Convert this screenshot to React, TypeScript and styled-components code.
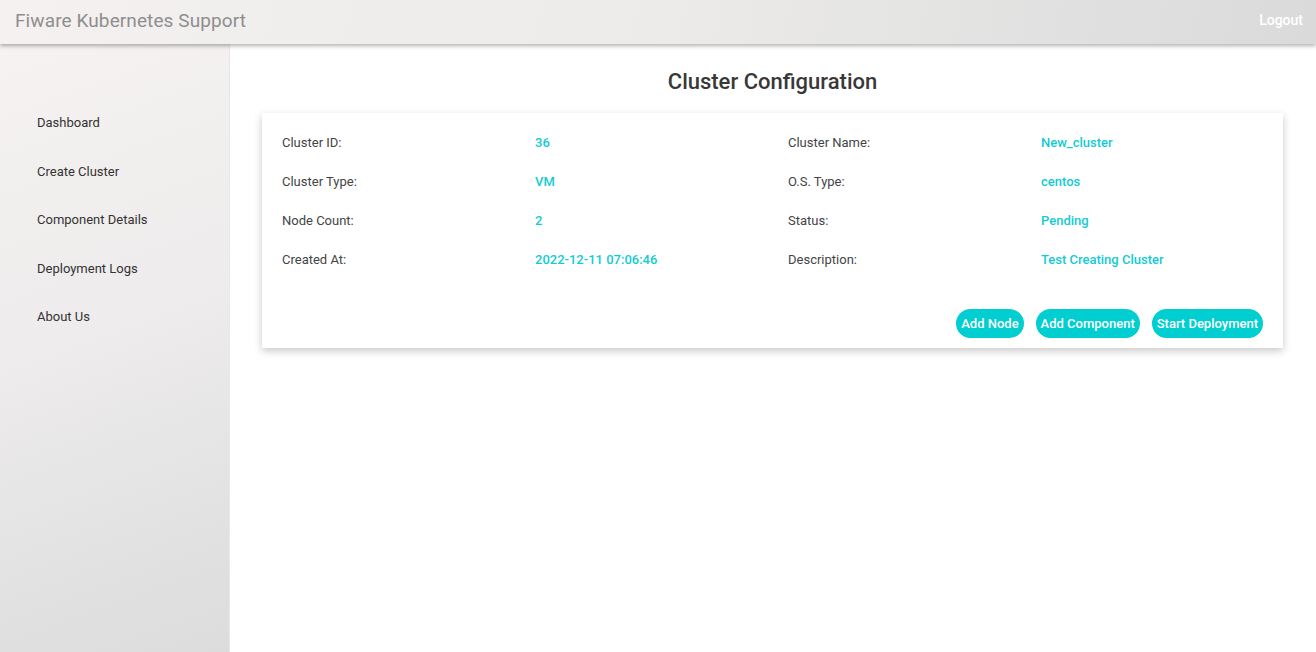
import React from 'react';
import styled, { createGlobalStyle } from 'styled-components';

const GlobalStyle = createGlobalStyle`
  html, body {
    margin: 0;
    padding: 0;
    height: 100%;
    background: #ffffff;
    font-family: Roboto, 'Liberation Sans', sans-serif;
  }
  #root {
    height: 100%;
  }
  * {
    box-sizing: border-box;
  }
`;

const Page = styled.div`
  display: flex;
  flex-direction: column;
  width: 100%;
  height: 652px;
  overflow: hidden;
`;

const Header = styled.header`
  position: relative;
  z-index: 2;
  display: flex;
  justify-content: space-between;
  align-items: center;
  height: 44px;
  padding: 0 13px 4px 15px;
  background: linear-gradient(100deg, #f4f1f0 0%, #ecebea 50%, #dadada 100%);
  box-shadow: 0 2px 4px rgba(0, 0, 0, 0.3);
  flex-shrink: 0;
`;

const Brand = styled.div`
  font-size: 19px;
  color: #8e8e8e;
  letter-spacing: 0.1px;
`;

const LogoutLink = styled.a`
  font-size: 14px;
  font-weight: 500;
  color: #ffffff;
  cursor: pointer;
`;

const Body = styled.div`
  display: flex;
  flex: 1;
  min-height: 0;
`;

const Sidebar = styled.nav`
  width: 230px;
  flex-shrink: 0;
  display: flex;
  flex-direction: column;
  padding: 67px 0 0 37px;
  background: linear-gradient(160deg, #f5f2f1 0%, #eeecec 45%, #dcdcdc 100%);
  border-right: 1px solid #e8e8e8;
`;

const NavItem = styled.a`
  display: block;
  height: 48.5px;
  line-height: 24px;
  font-size: 13px;
  color: #333333;
  cursor: pointer;
`;

const Main = styled.main`
  flex: 1;
  padding: 22px 33px 0 32px;
`;

const Title = styled.h2`
  margin: 0 0 15px;
  text-align: center;
  font-size: 22px;
  font-weight: 500;
  color: #383838;
  line-height: 32px;
`;

const Card = styled.section`
  background: #ffffff;
  box-shadow: 0 3px 8px rgba(0, 0, 0, 0.22);
  padding: 21px 20px 10px;
`;

const InfoGrid = styled.div`
  display: grid;
  grid-template-columns: 253px 253px 253px 1fr;
  grid-auto-rows: 39px;
`;

const Cell = styled.div<{ value?: boolean }>`
  font-size: 13px;
  line-height: 18px;
  color: ${({ value }) => (value ? '#14cbd3' : '#444444')};
  font-weight: ${({ value }) => (value ? 500 : 400)};
`;

const Actions = styled.div`
  display: flex;
  justify-content: flex-end;
  gap: 12px;
  margin-top: 19px;
`;

const PillButton = styled.button`
  height: 29px;
  padding: 0 5px;
  border: none;
  border-radius: 15px;
  background: #00ced1;
  color: #ffffff;
  font-family: Roboto, 'Liberation Sans', sans-serif;
  font-size: 13px;
  font-weight: 500;
  cursor: pointer;
`;

const NAV = ['Dashboard', 'Create Cluster', 'Component Details', 'Deployment Logs', 'About Us'];

const ROWS: [string, string, string, string][] = [
  ['Cluster ID:', '36', 'Cluster Name:', 'New_cluster'],
  ['Cluster Type:', 'VM', 'O.S. Type:', 'centos'],
  ['Node Count:', '2', 'Status:', 'Pending'],
  ['Created At:', '2022-12-11 07:06:46', 'Description:', 'Test Creating Cluster'],
];

export default function App() {
  return (
    <Page>
      <GlobalStyle />
      <Header>
        <Brand>Fiware Kubernetes Support</Brand>
        <LogoutLink>Logout</LogoutLink>
      </Header>
      <Body>
        <Sidebar>
          {NAV.map((item) => (
            <NavItem key={item}>{item}</NavItem>
          ))}
        </Sidebar>
        <Main>
          <Title>Cluster Configuration</Title>
          <Card>
            <InfoGrid>
              {ROWS.map((row) =>
                row.map((text, i) => (
                  <Cell key={`${row[0]}-${i}`} value={i % 2 === 1}>
                    {text}
                  </Cell>
                ))
              )}
            </InfoGrid>
            <Actions>
              <PillButton>Add Node</PillButton>
              <PillButton>Add Component</PillButton>
              <PillButton>Start Deployment</PillButton>
            </Actions>
          </Card>
        </Main>
      </Body>
    </Page>
  );
}
